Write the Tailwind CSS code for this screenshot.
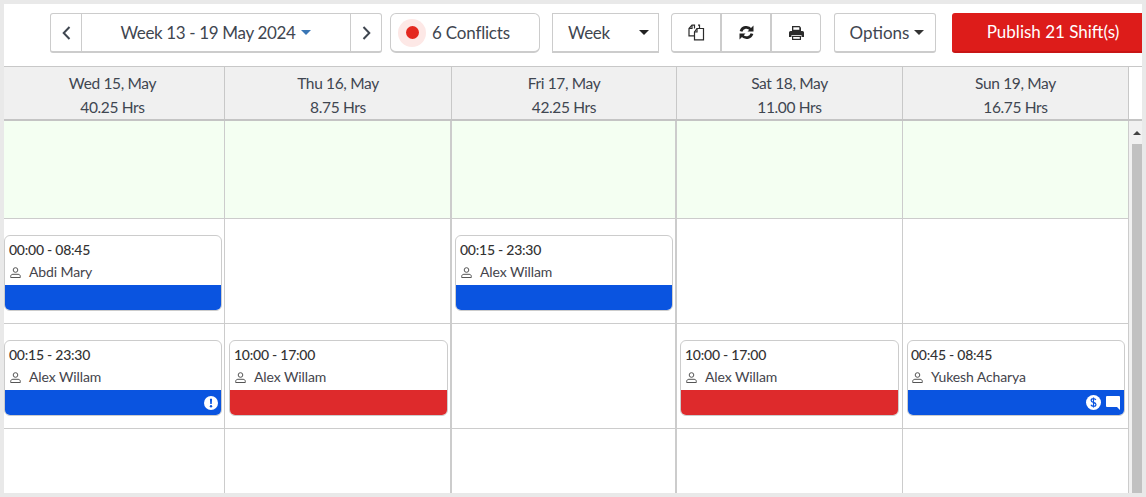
<!DOCTYPE html>
<html lang="en">
<head>
    <meta charset="UTF-8">
    <title>Roster Week</title>
    <script src="https://cdn.jsdelivr.net/npm/@tailwindcss/browser@4"></script>
</head>
<body class="bg-[#e9e9e9] font-['Lato',sans-serif] text-[#3f4650] overflow-hidden">
    <div class="w-[1146px] h-[497px] pt-[4px] pl-[4px] pr-[4px] pb-[4px] overflow-hidden">
        <div class="w-[1138px] h-[489px] bg-white flex flex-col overflow-hidden">
            <!-- toolbar -->
            <div class="h-[62px] shrink-0 flex items-start pt-[9px] pl-[46px] overflow-hidden">
                <div class="flex w-[332px] h-[40px] border border-[#ccc] border-b-2 rounded-[3px] text-[17px]">
                    <button class="w-[31px] flex items-center justify-center border-r border-[#ccc]">
                        <svg width="9" height="14" viewBox="0 0 9 14" fill="none" stroke="#3f4650" stroke-width="2"><path d="M7.500 1 1.700 7l5.800 6"/></svg>
                    </button>
                    <button class="flex-1 flex items-center justify-center gap-[6px] tracking-[-0.35px]">
                        Week 13 - 19 May 2024
                        <span class="w-0 h-0 border-x-[5px] border-x-transparent border-t-[5px] border-t-[#3a76b5]"></span>
                    </button>
                    <button class="w-[31px] flex items-center justify-center border-l border-[#ccc]">
                        <svg width="9" height="14" viewBox="0 0 9 14" fill="none" stroke="#3f4650" stroke-width="2"><path d="M1.500 1 7.300 7l-5.800 6"/></svg>
                    </button>
                </div>
                <div class="ml-[8px] w-[150px] h-[40px] border border-[#ccc] border-b-2 rounded-[6px] flex items-center pl-[7px] gap-[6px] text-[17px] tracking-[-0.2px]">
                    <span class="w-[28px] h-[28px] rounded-full bg-[#fde8e6] flex items-center justify-center">
                        <span class="w-[13px] h-[13px] rounded-full bg-[#e4281f]"></span>
                    </span>
                    6 Conflicts
                </div>
                <div class="ml-[12px] w-[107px] h-[40px] border border-[#ccc] border-b-2 flex items-center justify-between pl-[15px] pr-[9px] text-[17px] tracking-[-0.4px]">
                    Week
                    <span class="w-0 h-0 border-x-[5px] border-x-transparent border-t-[5px] border-t-[#222]"></span>
                </div>
                <div class="ml-[12px] flex w-[150px] h-[40px] border border-[#ccc] border-b-2 rounded-[4px]">
                    <button class="flex-1 flex items-center justify-center border-r-2 border-[#ccc]">
                        <svg width="17" height="17" viewBox="0 0 17 17" fill="none" stroke="#2b2b2b" stroke-width="1.200"><path d="M6.500 4.500V1.200H4L1 4.500v7.300h5.500"/><path d="M1 4.500h3V1.200"/><path d="M9 4.500h6.500v11.300H6.500V8z"/><path d="M6.500 8H9V4.500"/><path d="M10 1.200h1.500v3.300"/></svg>
                    </button>
                    <button class="flex-1 flex items-center justify-center border-r-2 border-[#ccc]">
                        <svg width="15" height="15" viewBox="0 0 15 15" fill="none" stroke="#222" stroke-width="2.800"><path d="M2 6.300A5.600 5.600 0 0 1 11.800 4.500"/><path d="M13 8.700A5.600 5.600 0 0 1 3.200 10.500"/><path d="M14.500 .5v6h-6z" fill="#222" stroke="none"/><path d="M.5 14.500v-6h6z" fill="#222" stroke="none"/></svg>
                    </button>
                    <button class="flex-1 flex items-center justify-center">
                        <svg width="15" height="14" viewBox="0 0 15 14" fill="#2b2b2b"><path d="M3 0h7.500L12 1.500V5H3z"/><path d="M1.500 5h12A1.500 1.500 0 0 1 15 6.500V11h-2.500V9h-10v2H0V6.500A1.500 1.500 0 0 1 1.500 5z"/><path d="M3 9.800h9V14H3z"/><path d="M4.200 11h6.600v1.800H4.200z" fill="#fff"/><path d="M4.300 1.300h6V3.800h-6z" fill="#fff"/></svg>
                    </button>
                </div>
                <div class="ml-[13px] w-[102px] h-[40px] border border-[#ccc] border-b-2 rounded-[3px] flex items-center justify-center gap-[5px] pl-[4px] text-[17px]">
                    Options
                    <span class="w-0 h-0 border-x-[5px] border-x-transparent border-t-[5px] border-t-[#333]"></span>
                </div>
                <button class="ml-[16px] w-[190px] shrink-0 h-[40px] bg-[#dd1c1a] border-b-2 border-[#c81515] rounded-l-[3px] text-white text-[17px] pl-[12px]">Publish 21 Shift(s)</button>
            </div>

            <!-- day headers -->
            <div class="h-[55px] shrink-0 flex bg-[#f0f0f0] border-t border-[#c8c8c8] border-b-2 border-b-[#c4c4c4] text-[15.500px] tracking-[-0.35px] text-center leading-[24px]">
                <div class="w-[221px] border-r border-[#c8c8c8] pt-[4px] pr-[3px]"><div>Wed 15, May</div><div>40.25 Hrs</div></div>
                <div class="w-[227px] border-r border-[#c8c8c8] pt-[4px]"><div>Thu 16, May</div><div>8.75 Hrs</div></div>
                <div class="w-[225px] border-r border-[#c8c8c8] pt-[4px]"><div>Fri 17, May</div><div>42.25 Hrs</div></div>
                <div class="w-[226px] border-r border-[#c8c8c8] pt-[4px]"><div>Sat 18, May</div><div>11.00 Hrs</div></div>
                <div class="w-[226px] border-r border-[#c8c8c8] pt-[4px]"><div>Sun 19, May</div><div>16.75 Hrs</div></div>
                <div class="flex-1 bg-white"></div>
            </div>

            <!-- body -->
            <div class="flex-1 flex min-h-0">
                <div class="w-[1125px] flex flex-col">
                    <!-- open shifts row -->
                    <div class="h-[98px] flex bg-[#f4fff2] border-b border-[#ccc]">
                        <div class="w-[221px] border-r border-[#ccc]"></div>
                        <div class="w-[227px] border-r-2 border-[#ccc]"></div>
                        <div class="w-[225px] border-r-2 border-[#ccc]"></div>
                        <div class="w-[226px] border-r border-[#ccc]"></div>
                        <div class="w-[226px] border-r border-[#ccc]"></div>
                    </div>
                    <!-- row 1 -->
                    <div class="h-[105px] flex border-b border-[#ccc]">
                        <div class="w-[221px] border-r border-[#ccc] pt-[16px]">
                            <div class="w-[218px] h-[76px] border border-[#ccc] rounded-[6px] overflow-hidden flex flex-col">
                                <div class="h-[49px] px-[4px] pt-[4px] text-[14px] leading-[20px]">
                                    <div class="font-medium text-[#333] tracking-[-0.25px]">00:00 - 08:45</div>
                                    <div class="flex items-center gap-[8px] mt-[2px] text-[#44444c] tracking-[-0.1px]">
                                        <svg class="ml-[1px]" width="11" height="11" viewBox="0 0 11 11" fill="none" stroke="#555" stroke-width="1"><circle cx="5.500" cy="3" r="2.300"/><path d="M.7 10.500V9.300c0-1.300 1-2 2.300-2h5c1.300 0 2.300.7 2.300 2v1.200z"/></svg>
                                        Abdi Mary
                                    </div>
                                </div>
                                <div class="flex-1 bg-[#0a54e0]"></div>
                            </div>
                        </div>
                        <div class="w-[227px] border-r-2 border-[#ccc]"></div>
                        <div class="w-[225px] border-r-2 border-[#ccc] pt-[16px] pl-[3px]">
                            <div class="w-[218px] h-[76px] border border-[#ccc] rounded-[6px] overflow-hidden flex flex-col">
                                <div class="h-[49px] px-[4px] pt-[4px] text-[14px] leading-[20px]">
                                    <div class="font-medium text-[#333] tracking-[-0.25px]">00:15 - 23:30</div>
                                    <div class="flex items-center gap-[8px] mt-[2px] text-[#44444c] tracking-[-0.1px]">
                                        <svg class="ml-[1px]" width="11" height="11" viewBox="0 0 11 11" fill="none" stroke="#555" stroke-width="1"><circle cx="5.500" cy="3" r="2.300"/><path d="M.7 10.500V9.300c0-1.300 1-2 2.300-2h5c1.300 0 2.300.7 2.300 2v1.200z"/></svg>
                                        Alex Willam
                                    </div>
                                </div>
                                <div class="flex-1 bg-[#0a54e0]"></div>
                            </div>
                        </div>
                        <div class="w-[226px] border-r border-[#ccc]"></div>
                        <div class="w-[226px] border-r border-[#ccc]"></div>
                    </div>
                    <!-- row 2 -->
                    <div class="h-[105px] flex border-b border-[#ccc]">
                        <div class="w-[221px] border-r border-[#ccc] pt-[16px]">
                            <div class="w-[218px] h-[76px] border border-[#ccc] rounded-[6px] overflow-hidden flex flex-col">
                                <div class="h-[49px] px-[4px] pt-[4px] text-[14px] leading-[20px]">
                                    <div class="font-medium text-[#333] tracking-[-0.25px]">00:15 - 23:30</div>
                                    <div class="flex items-center gap-[8px] mt-[2px] text-[#44444c] tracking-[-0.1px]">
                                        <svg class="ml-[1px]" width="11" height="11" viewBox="0 0 11 11" fill="none" stroke="#555" stroke-width="1"><circle cx="5.500" cy="3" r="2.300"/><path d="M.7 10.500V9.300c0-1.300 1-2 2.300-2h5c1.300 0 2.300.7 2.300 2v1.200z"/></svg>
                                        Alex Willam
                                    </div>
                                </div>
                                <div class="flex-1 bg-[#0a54e0] flex items-center justify-end pr-[3px]">
                                    <svg width="14" height="14" viewBox="0 0 13 13"><circle cx="6.500" cy="6.500" r="6.500" fill="#fff"/><path d="M5.500 2.500h2l-.3 5h-1.400z" fill="#0a54e0"/><circle cx="6.500" cy="9.500" r="1.100" fill="#0a54e0"/></svg>
                                </div>
                            </div>
                        </div>
                        <div class="w-[227px] border-r-2 border-[#ccc] pt-[16px] pl-[4px]">
                            <div class="w-[219px] h-[76px] border border-[#ccc] rounded-[6px] overflow-hidden flex flex-col">
                                <div class="h-[49px] px-[4px] pt-[4px] text-[14px] leading-[20px]">
                                    <div class="font-medium text-[#333] tracking-[-0.25px]">10:00 - 17:00</div>
                                    <div class="flex items-center gap-[8px] mt-[2px] text-[#44444c] tracking-[-0.1px]">
                                        <svg class="ml-[1px]" width="11" height="11" viewBox="0 0 11 11" fill="none" stroke="#555" stroke-width="1"><circle cx="5.500" cy="3" r="2.300"/><path d="M.7 10.500V9.300c0-1.300 1-2 2.300-2h5c1.300 0 2.300.7 2.300 2v1.200z"/></svg>
                                        Alex Willam
                                    </div>
                                </div>
                                <div class="flex-1 bg-[#de2a2c]"></div>
                            </div>
                        </div>
                        <div class="w-[225px] border-r-2 border-[#ccc]"></div>
                        <div class="w-[226px] border-r border-[#ccc] pt-[16px] pl-[3px]">
                            <div class="w-[219px] h-[76px] border border-[#ccc] rounded-[6px] overflow-hidden flex flex-col">
                                <div class="h-[49px] px-[4px] pt-[4px] text-[14px] leading-[20px]">
                                    <div class="font-medium text-[#333] tracking-[-0.25px]">10:00 - 17:00</div>
                                    <div class="flex items-center gap-[8px] mt-[2px] text-[#44444c] tracking-[-0.1px]">
                                        <svg class="ml-[1px]" width="11" height="11" viewBox="0 0 11 11" fill="none" stroke="#555" stroke-width="1"><circle cx="5.500" cy="3" r="2.300"/><path d="M.7 10.500V9.300c0-1.300 1-2 2.300-2h5c1.300 0 2.300.7 2.300 2v1.200z"/></svg>
                                        Alex Willam
                                    </div>
                                </div>
                                <div class="flex-1 bg-[#de2a2c]"></div>
                            </div>
                        </div>
                        <div class="w-[226px] border-r border-[#ccc] pt-[16px] pl-[4px]">
                            <div class="w-[218px] h-[76px] border border-[#ccc] rounded-[6px] overflow-hidden flex flex-col">
                                <div class="h-[49px] px-[3px] pt-[4px] text-[14px] leading-[20px]">
                                    <div class="font-medium text-[#333] tracking-[-0.25px]">00:45 - 08:45</div>
                                    <div class="flex items-center gap-[8px] mt-[2px] text-[#44444c] tracking-[-0.1px]">
                                        <svg class="ml-[1px]" width="11" height="11" viewBox="0 0 11 11" fill="none" stroke="#555" stroke-width="1"><circle cx="5.500" cy="3" r="2.300"/><path d="M.7 10.500V9.300c0-1.300 1-2 2.300-2h5c1.300 0 2.300.7 2.300 2v1.200z"/></svg>
                                        Yukesh Acharya
                                    </div>
                                </div>
                                <div class="flex-1 bg-[#0a54e0] flex items-center justify-end gap-[5px] pr-[4px]">
                                    <svg width="15" height="15" viewBox="0 0 14 14"><circle cx="7" cy="7" r="7" fill="#fff"/><path d="M9.200 4.600C8.800 3.800 8 3.400 7 3.400c-1.300 0-2.200.6-2.200 1.700 0 2.300 4.500 1.300 4.500 3.700 0 1.100-1 1.800-2.300 1.800-1.100 0-2-.5-2.400-1.400M7 2.300v9.400" fill="none" stroke="#0a54e0" stroke-width="1.100"/></svg>
                                    <svg width="14" height="14" viewBox="0 0 14 14" fill="#fff"><path d="M1 0h12a1 1 0 0 1 1 1v13l-3-3H1a1 1 0 0 1-1-1V1a1 1 0 0 1 1-1z"/></svg>
                                </div>
                            </div>
                        </div>
                    </div>
                    <!-- row 3 -->
                    <div class="flex-1 flex">
                        <div class="w-[221px] border-r border-[#ccc]"></div>
                        <div class="w-[227px] border-r-2 border-[#ccc]"></div>
                        <div class="w-[225px] border-r-2 border-[#ccc]"></div>
                        <div class="w-[226px] border-r border-[#ccc]"></div>
                        <div class="w-[226px] border-r border-[#ccc]"></div>
                    </div>
                </div>
                <!-- scrollbar -->
                <div class="flex-1 bg-[#f1f1f1] flex flex-col items-end pl-[3px]">
                    <div class="w-full h-[23px] flex items-center justify-center">
                        <span class="w-0 h-0 border-x-[4px] border-x-transparent border-b-[4px] border-b-[#444]"></span>
                    </div>
                    <div class="w-[10px] flex-1 bg-[#c1c1c1]"></div>
                </div>
            </div>
        </div>
    </div>
</body>
</html>
